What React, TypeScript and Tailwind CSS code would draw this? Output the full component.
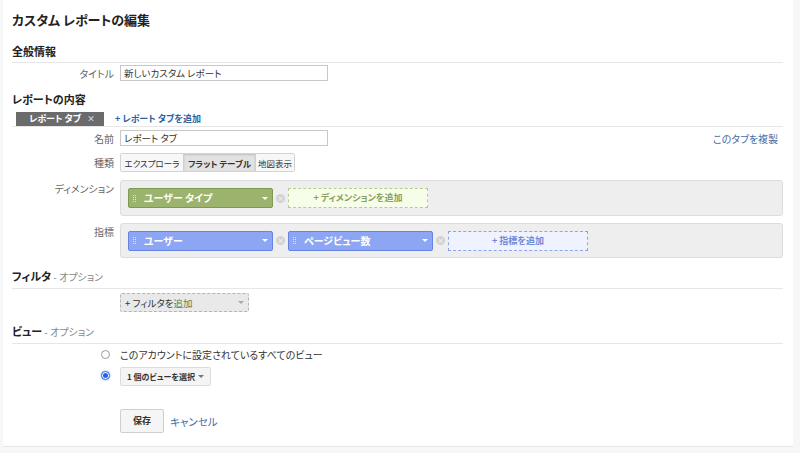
import React from 'react';

const font = { fontFamily: '"Noto Sans CJK JP", "Liberation Sans", sans-serif' };

const Label = ({ children, className = '' }: { children?: React.ReactNode; className?: string }) => (
  <div className={`w-[108px] shrink-0 pr-[6px] text-right text-[10px] leading-[15px] text-[#666] ${className}`}>{children}</div>
);

const Grip = () => (
  <div className="grid grid-cols-2 gap-x-[1px] gap-y-[1px] opacity-70">
    {Array.from({ length: 8 }).map((_, i) => (
      <span key={i} className="block h-[1px] w-[1px] bg-white" />
    ))}
  </div>
);

const Caret = ({ color = 'border-t-white' }: { color?: string }) => (
  <span className={`block h-0 w-0 border-x-[3px] border-t-[3px] border-x-transparent ${color}`} />
);

const RemoveDot = () => (
  <span className="flex h-[9px] w-[9px] items-center justify-center rounded-full bg-[#d2d2d2] text-[7px] leading-none text-white">
    ×
  </span>
);

const Chip = ({ text, tone }: { text: string; tone: 'green' | 'blue' }) => (
  <div
    className={`flex h-[20px] w-[145px] items-center gap-[8px] rounded-[2px] border px-[4px] text-[10px] font-bold leading-[14px] text-white ${
      tone === 'green' ? 'border-[#7d9a52] bg-[#9bb36d]' : 'border-[#6584e2] bg-[#8da6f4]'
    }`}
  >
    <Grip />
    <span className="flex-1">{text}</span>
    <Caret />
  </div>
);

export default function App() {
  return (
    <div className="h-[453px] w-[800px] overflow-hidden bg-[#f6f7f9] pl-[3px] pr-[7px] [font-feature-settings:'palt']" style={font}>
      <div className="h-[447px] border-b border-[#e6e6e6] bg-white pl-[9px] pr-[10px] pt-[10px]">
        <h1 className="text-[13px] font-bold leading-[20px] text-[#222]">カスタム レポートの編集</h1>

        <div className="mt-[14px] border-b border-[#e6e6e6] pb-[4px] text-[11px] font-bold leading-[14px] text-[#222]">全般情報</div>
        <div className="mt-[2px] flex h-[16px] items-center">
          <Label>タイトル</Label>
          <div className="flex h-[16px] w-[208px] items-center border border-[#c8c8c8] px-[3px] text-[9.5px] leading-[14px] text-[#333]">
            新しいカスタム レポート
          </div>
        </div>

        <div className="mt-[11px] text-[11px] font-bold leading-[14px] text-[#222]">レポートの内容</div>
        <div className="mt-[6px] flex h-[15px] items-start border-b border-[#e6e6e6]">
          <div className="ml-[4px] flex h-[14px] w-[88px] items-center justify-between bg-[#6b6b6b] pl-[13px] pr-[9px] text-[9px] font-bold leading-[14px] text-white">
            <span>レポート タブ</span>
            <span className="text-[8px] text-[#ddd]">×</span>
          </div>
          <div className="ml-[11px] text-[9px] font-bold leading-[14px] text-[#2e5f9e]">+ レポート タブを追加</div>
        </div>

        <div className="mt-[3px] flex h-[16px] items-center">
          <Label>名前</Label>
          <div className="flex h-[16px] w-[208px] items-center border border-[#c8c8c8] px-[3px] text-[9.5px] leading-[14px] text-[#333]">
            レポート タブ
          </div>
          <div className="ml-auto mr-[5px] text-[10px] leading-[15px] text-[#3f6ea8]">このタブを複製</div>
        </div>

        <div className="mt-[7px] flex h-[19px] items-center">
          <Label>種類</Label>
          <div className="flex h-[19px] rounded-[2px] border border-[#d3d3d3] text-[8.5px] leading-[12px] text-[#333]">
            <span className="flex w-[62px] items-center justify-center bg-[#f7f7f7]">エクスプローラ</span>
            <span className="flex w-[73px] items-center justify-center border-x border-[#cfcfcf] bg-[#e2e2e2] font-bold shadow-[inset_0_1px_2px_rgba(0,0,0,0.15)]">
              フラット テーブル
            </span>
            <span className="flex w-[38px] items-center justify-center bg-[#f7f7f7]">地図表示</span>
          </div>
        </div>

        <div className="mt-[8px] flex">
          <Label className="pt-[1px]">ディメンション</Label>
          <div className="flex h-[36px] flex-1 items-center gap-[3px] rounded-[3px] border border-[#dcdcdc] bg-[#eeeeee] px-[7px]">
            <Chip text="ユーザー タイプ" tone="green" />
            <RemoveDot />
            <div className="flex h-[20px] w-[140px] items-center justify-center border border-dashed border-[#b9c993] bg-[#f6fde8] text-[9px] font-bold leading-[12px] text-[#8aa05e]">
              + ディメンションを追加
            </div>
          </div>
        </div>

        <div className="mt-[7px] flex">
          <Label className="pt-[1px]">指標</Label>
          <div className="flex h-[35px] flex-1 items-center gap-[3px] rounded-[3px] border border-[#dcdcdc] bg-[#eeeeee] px-[7px]">
            <Chip text="ユーザー" tone="blue" />
            <RemoveDot />
            <Chip text="ページビュー数" tone="blue" />
            <RemoveDot />
            <div className="flex h-[20px] w-[140px] items-center justify-center border border-dashed border-[#8fa3e6] bg-[#eff3ff] text-[9px] font-bold leading-[12px] text-[#7088d8]">
              + 指標を追加
            </div>
          </div>
        </div>

        <div className="mt-[9px] border-b border-[#e6e6e6] pb-[4px] leading-[14px]">
          <span className="text-[11px] font-bold text-[#222]">フィルタ</span>
          <span className="text-[10px] text-[#888]"> - オプション</span>
        </div>
        <div className="mt-[4px] flex h-[19px]">
          <Label />
          <div className="flex h-[19px] w-[129px] items-center justify-between rounded-[2px] border border-dashed border-[#b5b5b5] bg-[#e9e9e9] px-[4px] text-[9.5px] leading-[12px]">
            <span className="text-[#333]">
              + フィルタを<span className="text-[#5f7f45]">追加</span>
            </span>
            <Caret color="border-t-[#aaa]" />
          </div>
        </div>

        <div className="mt-[10px] border-b border-[#e6e6e6] pb-[4px] leading-[14px]">
          <span className="text-[11px] font-bold text-[#222]">ビュー</span>
          <span className="text-[10px] text-[#888]"> - オプション</span>
        </div>
        <div className="mt-[3px] flex h-[15px] items-center">
          <div className="flex w-[108px] shrink-0 justify-end pr-[10px]">
            <span className="block h-[9px] w-[9px] rounded-full border border-[#999] bg-white" />
          </div>
          <span className="text-[10px] leading-[15px] text-[#333]">このアカウントに設定されているすべてのビュー</span>
        </div>
        <div className="mt-[5px] flex h-[19px] items-start">
          <div className="flex w-[108px] shrink-0 justify-end pr-[10px] pt-[4px]">
            <span className="flex h-[9px] w-[9px] items-center justify-center rounded-full border border-[#2d6be0] bg-white shadow-[0_0_2px_#6aa0ff]">
              <span className="block h-[5px] w-[5px] rounded-full bg-[#1f63e8]" />
            </span>
          </div>
          <div className="flex h-[19px] w-[91px] items-center justify-between whitespace-nowrap rounded-[2px] border border-[#dcdcdc] bg-[#f4f4f4] pl-[6px] pr-[6px] text-[8px] font-bold leading-[12px] text-[#333]">
            <span>1 個のビューを選択</span>
            <Caret color="border-t-[#777]" />
          </div>
        </div>

        <div className="mt-[23px] flex h-[24px] items-center">
          <Label />
          <div className="flex h-[24px] w-[44px] items-center justify-center rounded-[2px] border border-[#cfcfcf] bg-[#f5f5f5] text-[9px] font-bold leading-[12px] text-[#333]">
            保存
          </div>
          <span className="ml-[6px] text-[10.5px] leading-[15px] text-[#3f6ea8]">キャンセル</span>
        </div>
      </div>
    </div>
  );
}
